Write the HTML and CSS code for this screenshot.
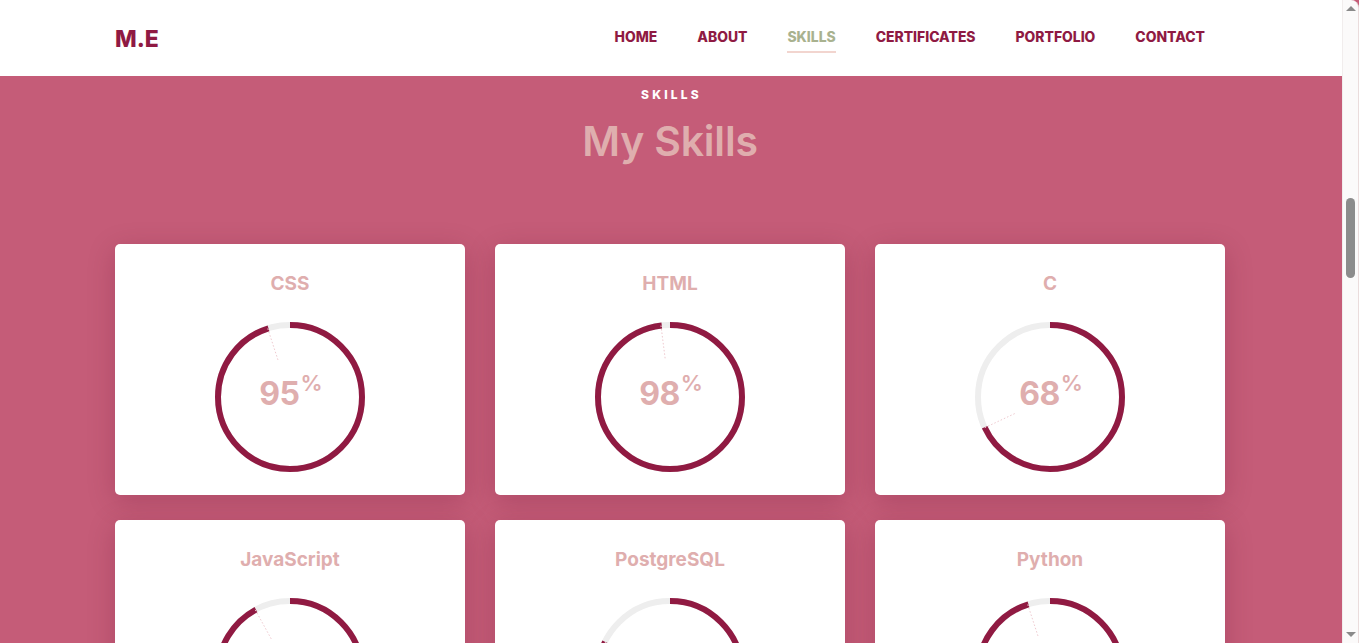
FILE: index.html
```html
<!DOCTYPE html>
<html lang="en">
<head>
<meta charset="utf-8">
<title>M.E — Skills</title>
<link rel="stylesheet" href="styles.css">
</head>
<body>
<div class="window">
  <div class="viewport">
    <header class="header">
      <div class="container header-inner">
        <a class="logo" href="#">M.E</a>
        <nav class="nav">
          <a href="#">HOME</a>
          <a href="#">ABOUT</a>
          <a href="#" class="active">SKILLS</a>
          <a href="#">CERTIFICATES</a>
          <a href="#">PORTFOLIO</a>
          <a href="#">CONTACT</a>
        </nav>
      </div>
    </header>
    <section class="skills">
      <div class="container">
        <p class="eyebrow">SKILLS</p>
        <h2 class="title">My Skills</h2>
        <div class="grid">
          <div class="card">
            <h3>CSS</h3>
            <div class="ring">
              <svg viewBox="0 0 150 150" width="150" height="150">
                <circle class="track" cx="75" cy="75" r="72"/>
                <circle class="bar" cx="75" cy="75" r="72" stroke-dasharray="429.77 452.39" transform="rotate(-90 75 75)"/>
                <line class="tick" x1="52.75" y1="6.53" x2="63.57" y2="39.81"/>
              </svg>
              <div class="pct"><span class="num">95</span><span class="sym">%</span></div>
            </div>
          </div>
          <div class="card">
            <h3>HTML</h3>
            <div class="ring">
              <svg viewBox="0 0 150 150" width="150" height="150">
                <circle class="track" cx="75" cy="75" r="72"/>
                <circle class="bar" cx="75" cy="75" r="72" stroke-dasharray="443.34 452.39" transform="rotate(-90 75 75)"/>
                <line class="tick" x1="65.98" y1="3.57" x2="70.36" y2="38.29"/>
              </svg>
              <div class="pct"><span class="num">98</span><span class="sym">%</span></div>
            </div>
          </div>
          <div class="card">
            <h3>C</h3>
            <div class="ring">
              <svg viewBox="0 0 150 150" width="150" height="150">
                <circle class="track" cx="75" cy="75" r="72"/>
                <circle class="bar" cx="75" cy="75" r="72" stroke-dasharray="307.63 452.39" transform="rotate(-90 75 75)"/>
                <line class="tick" x1="9.85" y1="105.66" x2="41.52" y2="90.75"/>
              </svg>
              <div class="pct"><span class="num">68</span><span class="sym">%</span></div>
            </div>
          </div>
          <div class="card">
            <h3>JavaScript</h3>
            <div class="ring">
              <svg viewBox="0 0 150 150" width="150" height="150">
                <circle class="track" cx="75" cy="75" r="72"/>
                <circle class="bar" cx="75" cy="75" r="72" stroke-dasharray="416.20 452.39" transform="rotate(-90 75 75)"/>
                <line class="tick" x1="40.31" y1="11.91" x2="57.17" y2="42.58"/>
              </svg>
              <div class="pct"><span class="num">92</span><span class="sym">%</span></div>
            </div>
          </div>
          <div class="card">
            <h3>PostgreSQL</h3>
            <div class="ring">
              <svg viewBox="0 0 150 150" width="150" height="150">
                <circle class="track" cx="75" cy="75" r="72"/>
                <circle class="bar" cx="75" cy="75" r="72" stroke-dasharray="370.96 452.39" transform="rotate(-90 75 75)"/>
                <line class="tick" x1="9.85" y1="44.34" x2="41.52" y2="59.25"/>
              </svg>
              <div class="pct"><span class="num">82</span><span class="sym">%</span></div>
            </div>
          </div>
          <div class="card">
            <h3>Python</h3>
            <div class="ring">
              <svg viewBox="0 0 150 150" width="150" height="150">
                <circle class="track" cx="75" cy="75" r="72"/>
                <circle class="bar" cx="75" cy="75" r="72" stroke-dasharray="429.77 452.39" transform="rotate(-90 75 75)"/>
                <line class="tick" x1="52.75" y1="6.53" x2="63.57" y2="39.81"/>
              </svg>
              <div class="pct"><span class="num">95</span><span class="sym">%</span></div>
            </div>
          </div>
        </div>
      </div>
    </section>
  </div>
  <div class="scrollbar" aria-hidden="true">
    <span class="arrow up"></span>
    <div class="sb-track"><span class="thumb"></span></div>
    <span class="arrow down"></span>
  </div>
</div>
</body>
</html>
```

FILE: styles.css
```css
* { box-sizing: border-box; }
html, body {
  margin: 0;
  padding: 0;
  height: 643px;
  overflow: hidden;
}
body {
  font-family: Inter, "Open Sans", "Liberation Sans", sans-serif;
  background: #c55c78;
}
.window {
  display: flex;
  height: 643px;
}
.viewport {
  flex: 1;
  min-width: 0;
  height: 643px;
  overflow: hidden;
  background: #c55c78;
}
.container {
  width: 1110px;
  margin-left: calc(50% - 556px);
}

/* Header */
.header {
  background: #ffffff;
  height: 76px;
}
.header-inner {
  height: 76px;
  display: flex;
  align-items: center;
  justify-content: space-between;
}
.logo {
  color: #8f1a43;
  font-weight: 800;
  font-size: 23px;
  text-decoration: none;
  letter-spacing: 0;
  margin-top: 1px;
}
.nav {
  display: flex;
  align-items: center;
  margin-top: -2px;
}
.nav a {
  color: #8f1a43;
  font-weight: 800;
  font-size: 13.9px;
  text-decoration: none;
  padding: 0 20px;
  line-height: 20px;
}
.nav a.active {
  color: #a9b28f;
}
.nav a.active::after {
  content: "";
  display: block;
  height: 2px;
  background: #f2d5cf;
  margin-top: 4px;
  margin-bottom: -6px;
}

/* Skills section */
.skills .container {
  display: flex;
  flex-direction: column;
  align-items: center;
}
.eyebrow {
  margin: 10px 0 0;
  color: #ffffff;
  font-weight: 800;
  font-size: 12px;
  letter-spacing: 3.2px;
  line-height: 18px;
  padding-left: 3px;
}
.title {
  margin: 10px 0 0;
  color: #dfaeae;
  font-weight: 600;
  font-size: 41px;
  line-height: 54px;
  letter-spacing: -0.2px;
}
.grid {
  margin-top: 76px;
  width: 100%;
  display: grid;
  grid-template-columns: repeat(3, 1fr);
  gap: 25px 30px;
}
.card {
  background: #ffffff;
  border-radius: 5px;
  box-shadow: 0 6px 28px rgba(90, 10, 40, 0.22);
  padding: 25px 0 23px;
  display: flex;
  flex-direction: column;
  align-items: center;
}
.card h3 {
  margin: 0 0 23px;
  font-size: 19px;
  line-height: 30px;
  font-weight: 700;
  color: #dfaeae;
}
.ring {
  display: grid;
  width: 150px;
  height: 150px;
}
.ring svg, .ring .pct {
  grid-area: 1 / 1;
}
.track {
  fill: none;
  stroke: #eeeeee;
  stroke-width: 6;
}
.bar {
  fill: none;
  stroke: #901a42;
  stroke-width: 6;
}
.tick {
  stroke: #efc9cf;
  stroke-width: 1;
  stroke-dasharray: 1.5 2;
}
.pct {
  display: flex;
  justify-content: center;
  align-items: flex-start;
  padding-top: 52px;
  color: #dfaeae;
  font-weight: 700;
  padding-left: 2px;
}
.pct .num {
  font-size: 32px;
  line-height: 40px;
  letter-spacing: -0.5px;
}
.pct .sym {
  font-size: 22px;
  line-height: 22px;
  margin-left: 1px;
  margin-top: -2px;
  font-weight: 600;
}

/* Fake browser scrollbar */
.scrollbar {
  width: 17px;
  height: 643px;
  background: #fbfafa;
  border-left: 1px solid #f1eded;
  border-right: 1px solid #eadcdc;
  border-top-right-radius: 8px;
  display: flex;
  flex-direction: column;
  align-items: center;
}
.arrow {
  width: 0;
  height: 0;
  border-left: 5px solid transparent;
  border-right: 5px solid transparent;
}
.arrow.up {
  border-bottom: 5px solid #8a8a8a;
  margin-top: 6px;
}
.arrow.down {
  border-top: 5px solid #8a8a8a;
  margin-bottom: 6px;
}
.sb-track {
  flex: 1;
  width: 100%;
  display: flex;
  justify-content: center;
}
.thumb {
  width: 9px;
  height: 80px;
  margin-top: 187px;
  background: #8c8c8c;
  border-radius: 5px;
}
```
